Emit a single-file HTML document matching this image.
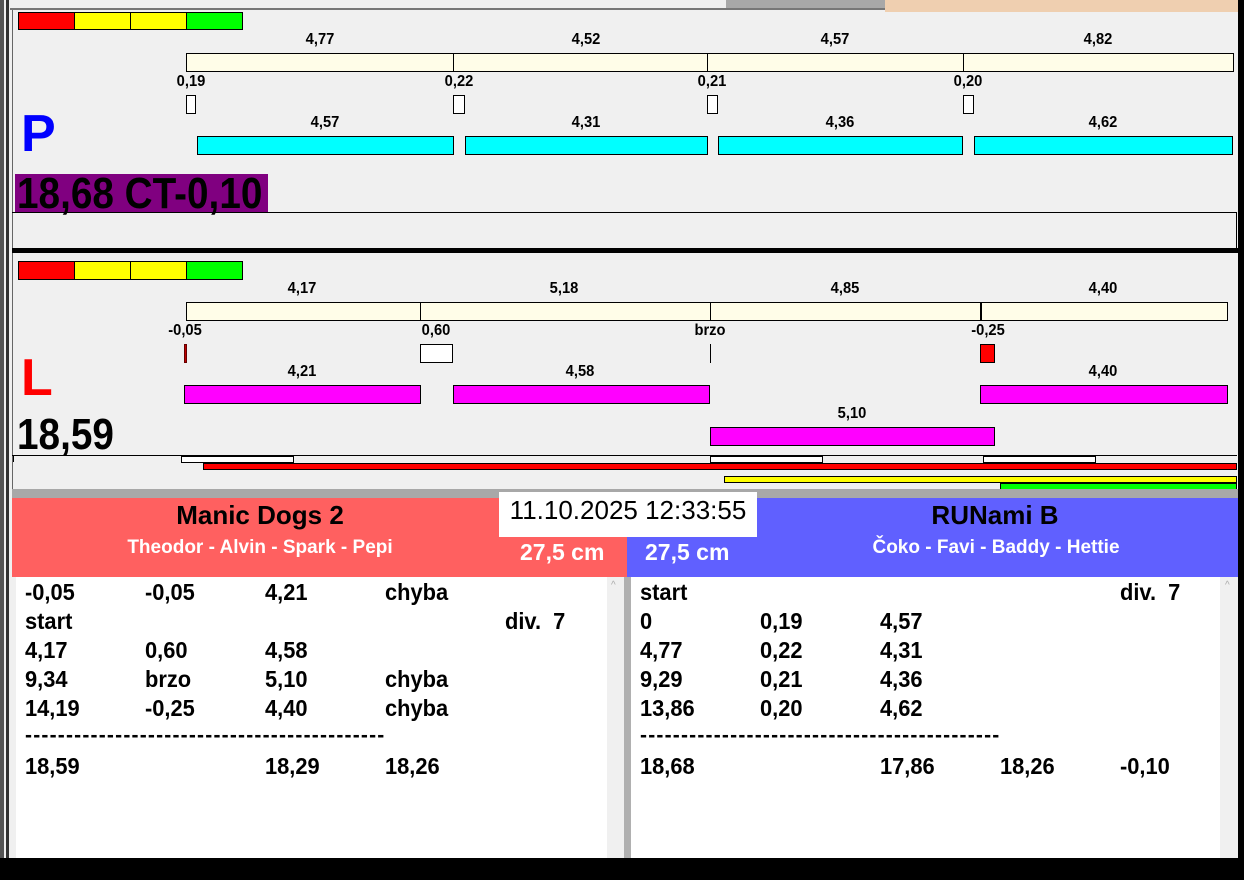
<!DOCTYPE html>
<html><head><meta charset="utf-8"><style>
*{margin:0;padding:0;box-sizing:border-box}
body{width:1244px;height:880px;position:relative;overflow:hidden;background:#f0f0f0;font-family:"Liberation Sans",Arial,sans-serif;font-weight:bold;color:#000}
.a{position:absolute}
.t{position:absolute;font-size:16px;transform:translateX(-50%) scaleX(0.92);white-space:nowrap;line-height:1}
.bx{position:absolute;border:1px solid #000}
.r{position:absolute;font-size:23px;white-space:nowrap;line-height:1;transform:scaleX(0.95);transform-origin:left}
.big{position:absolute;font-size:44px;line-height:44px;transform:scaleX(0.88);transform-origin:left;white-space:nowrap}
</style></head><body>
<!-- frame -->
<div class="a" style="left:0;top:0;width:4px;height:880px;background:#555"></div>
<div class="a" style="left:6px;top:0;width:3px;height:880px;background:#333"></div>
<div class="a" style="left:12px;top:10px;width:1px;height:480px;background:#666"></div>
<div class="a" style="left:1238px;top:0;width:6px;height:880px;background:#000"></div>
<!-- tabs -->
<div class="a" style="left:10px;top:0;width:875px;height:10px;background:#f0f0f0;border-bottom:2px solid #777"></div>
<div class="a" style="left:726px;top:0;width:159px;height:8px;background:#a8a8a8"></div>
<div class="a" style="left:885px;top:0;width:353px;height:12px;background:#efcfb0"></div>
<!-- P panel -->
<div class="bx" style="left:18px;top:12px;width:57px;height:18px;background:#f00"></div>
<div class="bx" style="left:74px;top:12px;width:57px;height:18px;background:#ff0"></div>
<div class="bx" style="left:130px;top:12px;width:57px;height:18px;background:#ff0"></div>
<div class="bx" style="left:186px;top:12px;width:57px;height:18px;background:#0f0"></div>
<div class="bx" style="left:186px;top:53px;width:1048px;height:19px;background:#fffde8"></div>
<div class="a" style="left:453px;top:53px;width:1px;height:19px;background:#000"></div>
<div class="a" style="left:707px;top:53px;width:1px;height:19px;background:#000"></div>
<div class="a" style="left:963px;top:53px;width:1px;height:19px;background:#000"></div>
<div class="t" style="left:320px;top:32px">4,77</div>
<div class="t" style="left:586px;top:32px">4,52</div>
<div class="t" style="left:835px;top:32px">4,57</div>
<div class="t" style="left:1098px;top:32px">4,82</div>
<div class="t" style="left:191px;top:74px">0,19</div>
<div class="t" style="left:459px;top:74px">0,22</div>
<div class="t" style="left:712px;top:74px">0,21</div>
<div class="t" style="left:968px;top:74px">0,20</div>
<div class="bx" style="left:186px;top:95px;width:10px;height:19px;background:#fff"></div>
<div class="bx" style="left:453px;top:95px;width:12px;height:19px;background:#fff"></div>
<div class="bx" style="left:707px;top:95px;width:11px;height:19px;background:#fff"></div>
<div class="bx" style="left:963px;top:95px;width:11px;height:19px;background:#fff"></div>
<div class="a" style="left:21px;top:108px;font-size:52px;color:#0000ff;line-height:1">P</div>
<div class="t" style="left:325px;top:115px">4,57</div>
<div class="t" style="left:586px;top:115px">4,31</div>
<div class="t" style="left:840px;top:115px">4,36</div>
<div class="t" style="left:1103px;top:115px">4,62</div>
<div class="bx" style="left:197px;top:136px;width:257px;height:19px;background:#0ff"></div>
<div class="bx" style="left:465px;top:136px;width:243px;height:19px;background:#0ff"></div>
<div class="bx" style="left:718px;top:136px;width:245px;height:19px;background:#0ff"></div>
<div class="bx" style="left:974px;top:136px;width:259px;height:19px;background:#0ff"></div>
<div class="a" style="left:15px;top:174px;width:253px;height:39px;background:#800080"></div>
<div class="big" style="left:17px;top:172px">18,68 CT-0,10</div>
<div class="a" style="left:12px;top:212px;width:1225px;height:37px;border-top:1px solid #000;border-right:1px solid #000"></div>
<div class="a" style="left:12px;top:248px;width:1226px;height:5px;background:#000"></div>
<!-- L panel -->
<div class="bx" style="left:18px;top:261px;width:57px;height:19px;background:#f00"></div>
<div class="bx" style="left:74px;top:261px;width:57px;height:19px;background:#ff0"></div>
<div class="bx" style="left:130px;top:261px;width:57px;height:19px;background:#ff0"></div>
<div class="bx" style="left:186px;top:261px;width:57px;height:19px;background:#0f0"></div>
<div class="bx" style="left:186px;top:302px;width:1042px;height:19px;background:#fffde8"></div>
<div class="a" style="left:420px;top:302px;width:1px;height:19px;background:#000"></div>
<div class="a" style="left:710px;top:302px;width:1px;height:19px;background:#000"></div>
<div class="a" style="left:980px;top:302px;width:2px;height:19px;background:#000"></div>
<div class="t" style="left:302px;top:281px">4,17</div>
<div class="t" style="left:564px;top:281px">5,18</div>
<div class="t" style="left:845px;top:281px">4,85</div>
<div class="t" style="left:1103px;top:281px">4,40</div>
<div class="t" style="left:185px;top:323px">-0,05</div>
<div class="t" style="left:436px;top:323px">0,60</div>
<div class="t" style="left:710px;top:323px">brzo</div>
<div class="t" style="left:988px;top:323px">-0,25</div>
<div class="a" style="left:184px;top:344px;width:3px;height:19px;background:#c00000;border:1px solid #600"></div>
<div class="bx" style="left:420px;top:344px;width:33px;height:19px;background:#fff"></div>
<div class="a" style="left:710px;top:344px;width:1px;height:19px;background:#000"></div>
<div class="bx" style="left:980px;top:344px;width:15px;height:19px;background:#f00"></div>
<div class="a" style="left:21px;top:352px;font-size:52px;color:#f00;line-height:1">L</div>
<div class="t" style="left:302px;top:364px">4,21</div>
<div class="t" style="left:580px;top:364px">4,58</div>
<div class="t" style="left:1103px;top:364px">4,40</div>
<div class="bx" style="left:184px;top:385px;width:237px;height:19px;background:#f0f"></div>
<div class="bx" style="left:453px;top:385px;width:257px;height:19px;background:#f0f"></div>
<div class="bx" style="left:980px;top:385px;width:248px;height:19px;background:#f0f"></div>
<div class="t" style="left:852px;top:406px">5,10</div>
<div class="bx" style="left:710px;top:427px;width:285px;height:19px;background:#f0f"></div>
<div class="big" style="left:17px;top:413px">18,59</div>
<div class="a" style="left:12px;top:455px;width:1225px;height:1px;background:#000"></div>
<div class="a" style="left:13px;top:455px;width:1px;height:7px;background:#000"></div>
<div class="bx" style="left:181px;top:456px;width:113px;height:7px;background:#fff"></div>
<div class="bx" style="left:710px;top:456px;width:113px;height:7px;background:#fff"></div>
<div class="bx" style="left:983px;top:456px;width:113px;height:7px;background:#fff"></div>
<div class="bx" style="left:203px;top:463px;width:1034px;height:7px;background:#f00"></div>
<div class="bx" style="left:724px;top:476px;width:513px;height:7px;background:#ff0"></div>
<div class="bx" style="left:1000px;top:483px;width:237px;height:7px;background:#0f0"></div>
<div class="a" style="left:12px;top:489px;width:1226px;height:9px;background:#a8a8a8"></div>
<!-- bottom headers -->
<div class="a" style="left:12px;top:498px;width:615px;height:79px;background:#ff6060"></div>
<div class="a" style="left:627px;top:498px;width:611px;height:79px;background:#6060ff"></div>
<div class="a" style="left:499px;top:492px;width:258px;height:45px;background:#fff"></div>
<div class="a" style="left:499px;top:495px;width:258px;text-align:center;font-size:26px;font-weight:normal;line-height:30px">11.10.2025 12:33:55</div>
<div class="a" style="left:110px;top:501px;width:300px;text-align:center;font-size:26px;line-height:28px">Manic Dogs 2</div>
<div class="a" style="left:60px;top:537px;width:400px;text-align:center;font-size:19px;color:#fff;line-height:22px">Theodor - Alvin - Spark - Pepi</div>
<div class="a" style="left:520px;top:539px;font-size:23px;color:#fff;line-height:26px">27,5 cm</div>
<div class="a" style="left:645px;top:539px;font-size:23px;color:#fff;line-height:26px">27,5 cm</div>
<div class="a" style="left:845px;top:501px;width:300px;text-align:center;font-size:26px;line-height:28px">RUNami B</div>
<div class="a" style="left:796px;top:537px;width:400px;text-align:center;font-size:19px;color:#fff;line-height:22px">Čoko - Favi - Baddy - Hettie</div>
<!-- lists -->
<div class="a" style="left:16px;top:577px;width:591px;height:281px;background:#fff"></div>
<div class="a" style="left:607px;top:577px;width:17px;height:281px;background:#f0f0f0"></div>
<div class="a" style="left:624px;top:577px;width:7px;height:281px;background:#b0b0b0"></div>
<div class="a" style="left:631px;top:577px;width:589px;height:281px;background:#fff"></div>
<div class="a" style="left:1220px;top:577px;width:18px;height:281px;background:#f0f0f0"></div>
<div class="a" style="left:611px;top:580px;font-size:10px;color:#aaa;font-weight:normal">^</div>
<div class="a" style="left:1225px;top:580px;font-size:10px;color:#aaa;font-weight:normal">^</div>
<div class="a" style="left:0;top:858px;width:1244px;height:22px;background:#000"></div>

<div class="r" style="left:25px;top:581px">-0,05</div><div class="r" style="left:145px;top:581px">-0,05</div><div class="r" style="left:265px;top:581px">4,21</div><div class="r" style="left:385px;top:581px">chyba</div>
<div class="r" style="left:25px;top:610px">start</div><div class="r" style="left:505px;top:610px">div.&nbsp; 7</div>
<div class="r" style="left:25px;top:639px">4,17</div><div class="r" style="left:145px;top:639px">0,60</div><div class="r" style="left:265px;top:639px">4,58</div>
<div class="r" style="left:25px;top:668px">9,34</div><div class="r" style="left:145px;top:668px">brzo</div><div class="r" style="left:265px;top:668px">5,10</div><div class="r" style="left:385px;top:668px">chyba</div>
<div class="r" style="left:25px;top:697px">14,19</div><div class="r" style="left:145px;top:697px">-0,25</div><div class="r" style="left:265px;top:697px">4,40</div><div class="r" style="left:385px;top:697px">chyba</div>
<div class="r" style="left:25px;top:725px;font-size:21px;transform:none;letter-spacing:1.2px">--------------------------------------------</div>
<div class="r" style="left:25px;top:755px">18,59</div><div class="r" style="left:265px;top:755px">18,29</div><div class="r" style="left:385px;top:755px">18,26</div>

<div class="r" style="left:640px;top:581px">start</div><div class="r" style="left:1120px;top:581px">div.&nbsp; 7</div>
<div class="r" style="left:640px;top:610px">0</div><div class="r" style="left:760px;top:610px">0,19</div><div class="r" style="left:880px;top:610px">4,57</div>
<div class="r" style="left:640px;top:639px">4,77</div><div class="r" style="left:760px;top:639px">0,22</div><div class="r" style="left:880px;top:639px">4,31</div>
<div class="r" style="left:640px;top:668px">9,29</div><div class="r" style="left:760px;top:668px">0,21</div><div class="r" style="left:880px;top:668px">4,36</div>
<div class="r" style="left:640px;top:697px">13,86</div><div class="r" style="left:760px;top:697px">0,20</div><div class="r" style="left:880px;top:697px">4,62</div>
<div class="r" style="left:640px;top:725px;font-size:21px;transform:none;letter-spacing:1.2px">--------------------------------------------</div>
<div class="r" style="left:640px;top:755px">18,68</div><div class="r" style="left:880px;top:755px">17,86</div><div class="r" style="left:1000px;top:755px">18,26</div><div class="r" style="left:1120px;top:755px">-0,10</div>
</body></html>
